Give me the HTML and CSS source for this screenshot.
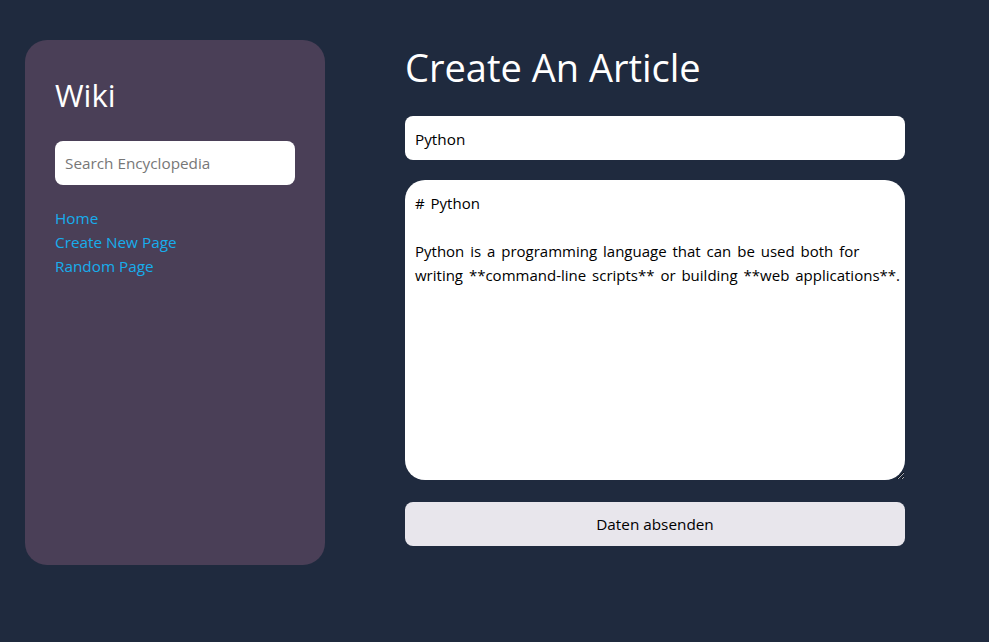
FILE: index.html
```html
<!DOCTYPE html>
<html lang="en">
<head>
<meta charset="utf-8">
<title>Create An Article</title>
<link rel="stylesheet" href="styles.css">
</head>
<body>
<div class="layout">
  <aside class="sidebar">
    <h2 class="brand">Wiki</h2>
    <form class="search">
      <input class="search-input" type="text" placeholder="Search Encyclopedia">
    </form>
    <nav class="nav">
      <a href="#">Home</a>
      <a href="#">Create New Page</a>
      <a href="#">Random Page</a>
    </nav>
  </aside>
  <main class="main">
    <h1 class="title">Create An Article</h1>
    <form class="article-form">
      <input class="field" type="text" value="Python">
      <textarea class="field area"># Python

Python is a programming language that can be used both for writing **command-line scripts** or building **web applications**.</textarea>
      <button class="submit" type="button">Daten absenden</button>
    </form>
  </main>
</div>
</body>
</html>
```

FILE: styles.css
```css
html, body {
  margin: 0;
  padding: 0;
  background: #1f2a3e;
  height: 100%;
}
body {
  font-family: "Open Sans", "Noto Sans", sans-serif;
  font-size: 15.3px;
  color: #fff;
}
.layout {
  display: flex;
  gap: 80px;
  padding: 40px 25px;
  align-items: flex-start;
}
.sidebar {
  width: 240px;
  height: 465px;
  padding: 30px;
  background: #4a3f57;
  border-radius: 22px;
}
.brand {
  margin: 0;
  font-weight: 400;
  font-size: 31px;
  line-height: 40px;
  padding-top: 5px;
}
.search {
  margin-top: 26px;
}
.search-input {
  box-sizing: border-box;
  width: 240px;
  height: 44px;
  border: none;
  border-radius: 8px;
  padding: 0 10px;
  font-family: inherit;
  font-size: 15.3px;
  background: #fff;
  color: #000;
  outline: none;
}
.search-input::placeholder {
  color: #777;
}
.nav {
  display: flex;
  flex-direction: column;
  margin-top: 21px;
}
.nav a {
  color: #17adec;
  text-decoration: none;
  line-height: 24px;
  font-size: 15.3px;
}
.main {
  width: 500px;
}
.title {
  margin: 0;
  font-weight: 400;
  font-size: 38px;
  line-height: 56px;
  margin-top: -1px;
}
.article-form {
  display: flex;
  flex-direction: column;
  margin-top: 21px;
}
.field {
  box-sizing: border-box;
  width: 500px;
  border: none;
  border-radius: 8px;
  background: #fff;
  color: #000;
  font-family: inherit;
  font-size: 15.3px;
  padding: 0 10px;
  outline: none;
}
input.field {
  height: 44px;
  padding-top: 1px;
}
.area {
  margin-top: 20px;
  height: 300px;
  padding: 11px 0 10px 10px;
  font-size: 15px;
  word-spacing: 2px;
  line-height: 24px;
  border-radius: 20px;
  resize: vertical;
}
.submit {
  margin-top: 22px;
  height: 44px;
  width: 500px;
  border: none;
  border-radius: 8px;
  background: #e8e6ec;
  color: #000;
  font-family: inherit;
  font-size: 15.3px;
}
```
